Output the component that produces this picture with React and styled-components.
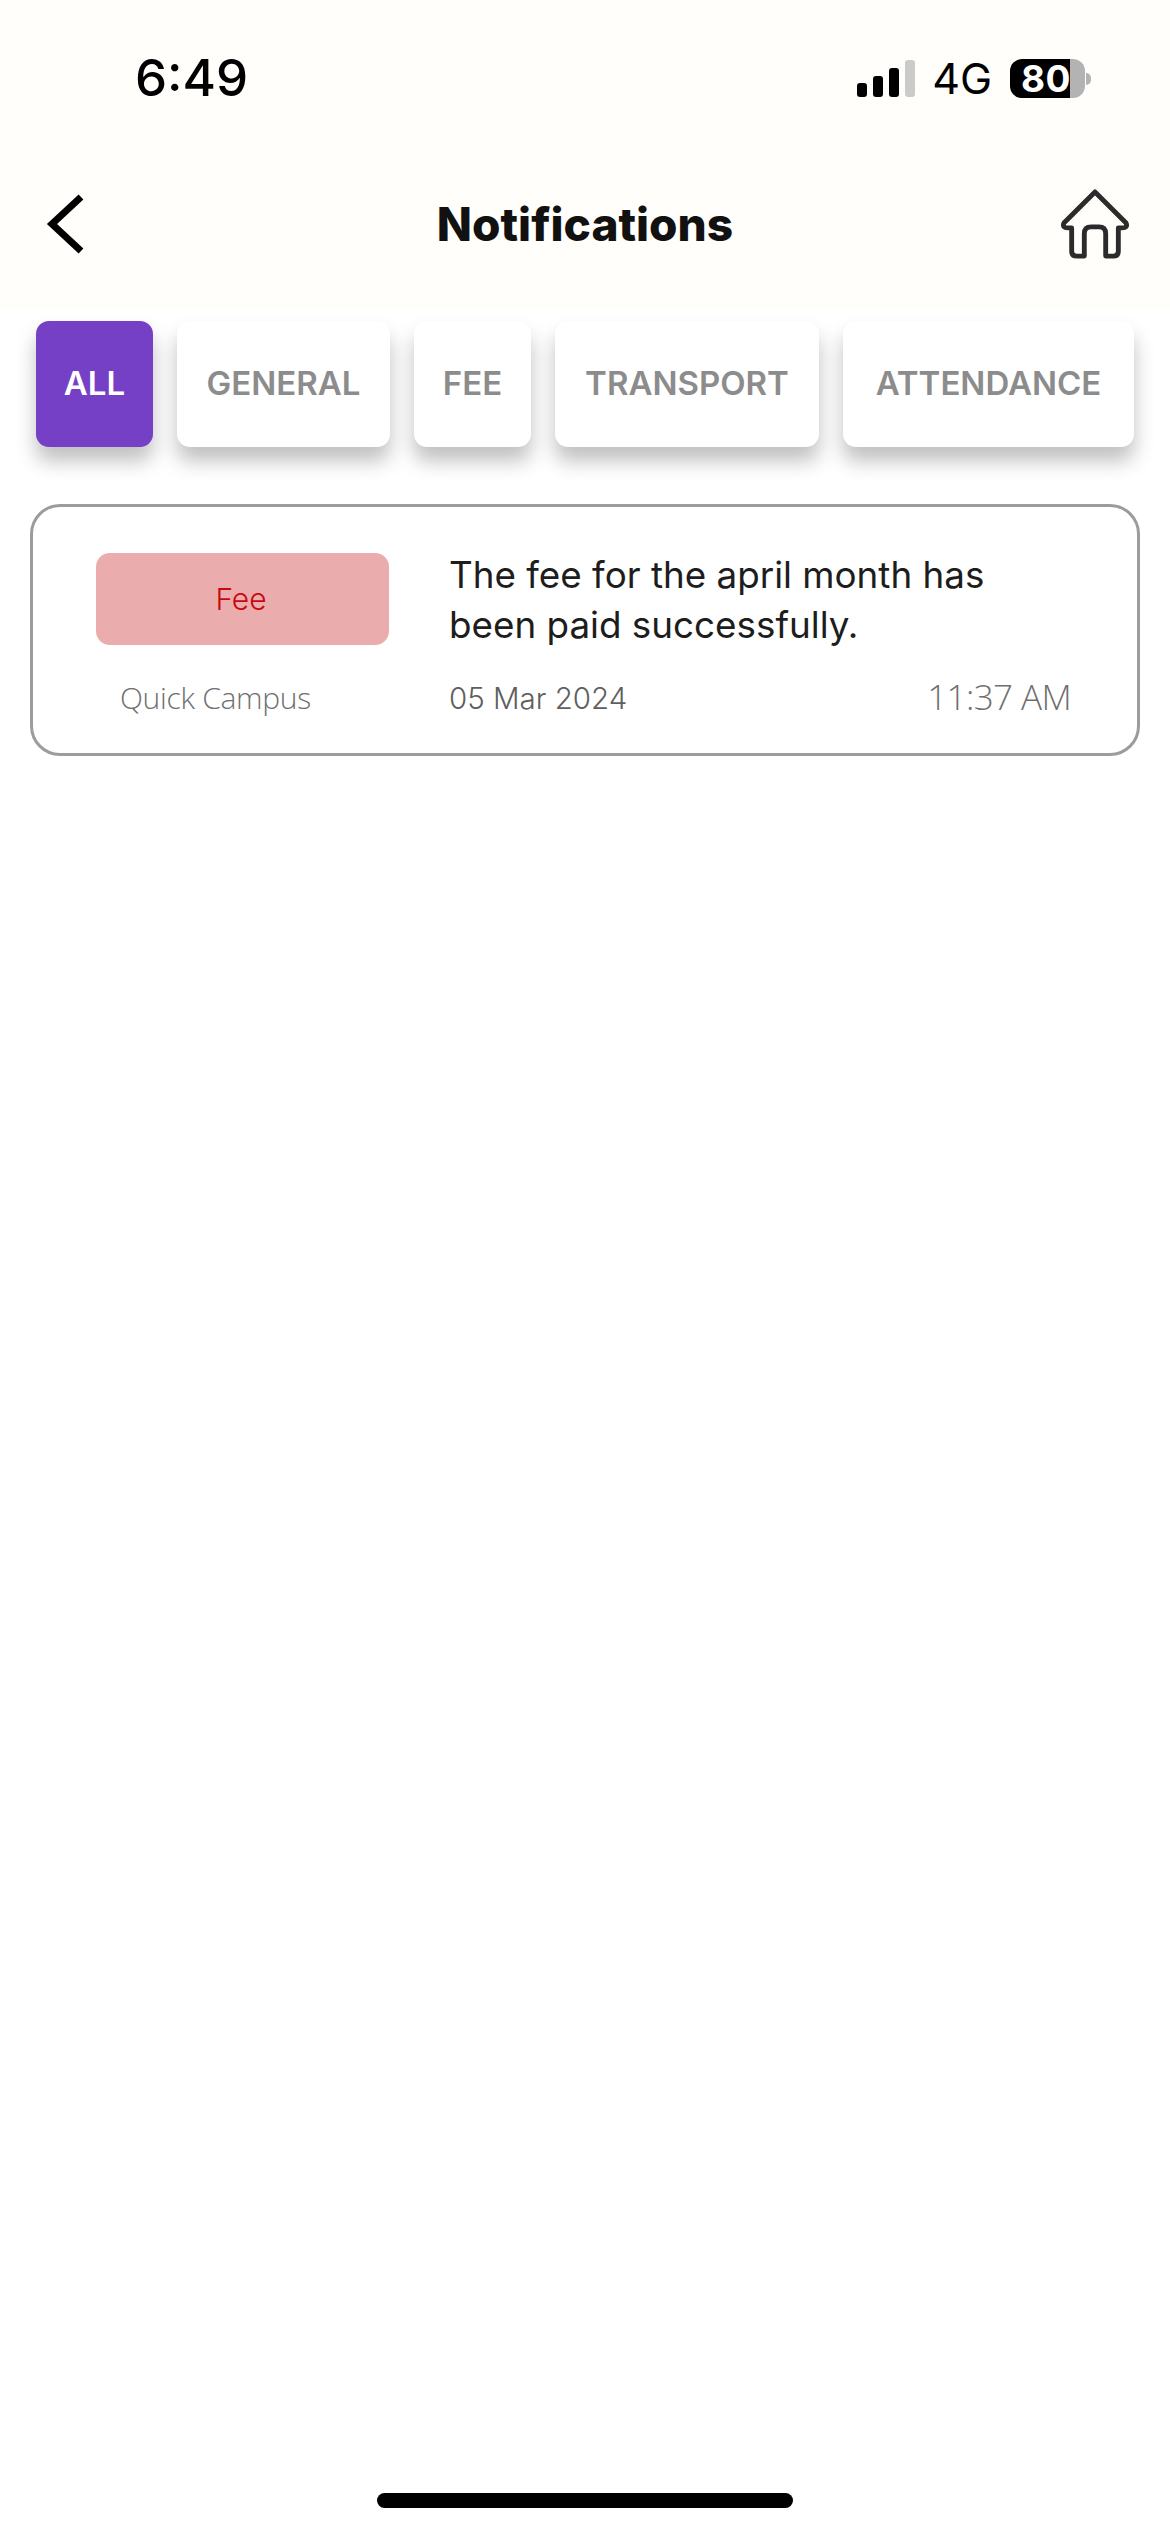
import React from 'react';
import styled, { createGlobalStyle } from 'styled-components';

const GlobalStyle = createGlobalStyle`
  * { box-sizing: border-box; }
  html, body { margin: 0; padding: 0; background: #fff; }
  body { font-family: Inter, 'Liberation Sans', sans-serif; }
`;

const Page = styled.div`
  width: 1170px;
  height: 2532px;
  display: flex;
  flex-direction: column;
  background: #fff;
  overflow: hidden;
`;

const Top = styled.div`
  height: 309px;
  background: #fffefb;
`;

const StatusBar = styled.div`
  height: 150px;
  padding: 50px 85px 0 135px;
  display: flex;
  justify-content: space-between;
  align-items: flex-start;
`;

const Clock = styled.div`
  font-size: 51px;
  line-height: 56px;
  font-weight: 500;
  color: #000;
`;

const StatusRight = styled.div`
  display: flex;
  align-items: center;
  height: 40px;
  margin-top: 8px;
`;

const Signal = styled.div`
  display: flex;
  align-items: flex-end;
  gap: 6px;
  height: 37px;
  margin-right: 17px;
`;

const Bar = styled.span`
  width: 10px;
  height: ${({ h }) => h}px;
  border-radius: 3px;
  background: ${({ off }) => (off ? '#cbcbcb' : '#000')};
`;

const Network = styled.div`
  font-size: 43px;
  line-height: 40px;
  font-weight: 400;
  color: #000;
  margin-right: 18px;
`;

const Battery = styled.div`
  position: relative;
  width: 75px;
  height: 39px;
  border-radius: 12px;
  background: linear-gradient(90deg, #000 80%, #b3b3b3 80%);
  color: #fff;
  font-size: 37px;
  line-height: 39px;
  font-weight: 700;
  padding-left: 11px;
  letter-spacing: 0.5px;

  &::after {
    content: '';
    position: absolute;
    left: 76px;
    top: 14px;
    width: 5px;
    height: 12px;
    border-radius: 0 6px 6px 0;
    background: #b3b3b3;
  }
`;

const Header = styled.div`
  height: 159px;
  padding: 0 40px 12px 46px;
  display: flex;
  align-items: center;
  justify-content: space-between;
  position: relative;
`;

const Title = styled.h1`
  position: absolute;
  left: 0;
  right: 0;
  margin: 0;
  text-align: center;
  font-size: 46px;
  line-height: 56px;
  font-weight: 800;
  color: #111;
`;

const Tabs = styled.div`
  margin-top: 12px;
  padding: 0 36px;
  display: flex;
  gap: 24px;
`;

const Tab = styled.div`
  width: ${({ w }) => w}px;
  height: 126px;
  padding-bottom: 3px;
  border-radius: 13px;
  display: flex;
  align-items: center;
  justify-content: center;
  font-size: 33px;
  font-weight: 600;
  white-space: nowrap;
  background: ${({ active }) => (active ? '#7540c5' : '#fff')};
  color: ${({ active }) => (active ? '#fff' : '#8c8c8c')};
  box-shadow: 0 14px 20px rgba(0, 0, 0, 0.25);
`;

const Card = styled.div`
  margin: 57px 30px 0;
  height: 252px;
  padding: 46px 66px 0 63px;
  border: 3px solid #9c9c9c;
  border-radius: 30px;
  display: grid;
  grid-template-columns: 293px 1fr;
  grid-template-rows: 92px 1fr;
  column-gap: 60px;
`;

const Badge = styled.div`
  border-radius: 14px;
  background: #ebacad;
  color: #c9080e;
  font-size: 30px;
  font-weight: 300;
  padding-right: 3px;
  display: flex;
  align-items: center;
  justify-content: center;
`;

const Message = styled.div`
  font-size: 36.8px;
  line-height: 50px;
  font-weight: 400;
  color: #1d1d1d;
  margin-top: -3px;
  white-space: nowrap;
`;

const Source = styled.div`
  font-family: 'Open Sans', sans-serif;
  font-size: 30px;
  line-height: 40px;
  font-weight: 300;
  color: #6f6f6f;
  margin: 33px 0 0 24px;
  letter-spacing: -0.3px;
`;

const Meta = styled.div`
  display: flex;
  justify-content: space-between;
  align-items: center;
  margin-top: 33px;
  height: 40px;
`;

const DateText = styled.span`
  font-size: 29.5px;
  font-weight: 350;
  color: #5f5f5f;
`;

const TimeText = styled.span`
  font-family: 'Open Sans', sans-serif;
  font-size: 35px;
  font-weight: 300;
  color: #6f6f6f;
  letter-spacing: -0.6px;
  margin-top: -4px;
`;

const HomeBar = styled.div`
  margin: auto auto 24px;
  width: 416px;
  height: 15px;
  border-radius: 8px;
  background: #000;
`;

const tabs = [
  { name: 'ALL', w: 117, active: true },
  { name: 'GENERAL', w: 213 },
  { name: 'FEE', w: 117 },
  { name: 'TRANSPORT', w: 264 },
  { name: 'ATTENDANCE', w: 291 }
];

const BackIcon = () => (
  <svg width="40" height="60" viewBox="0 0 40 60" fill="none">
    <path d="M35 3 L6 30 L35 57" stroke="#000" strokeWidth="7" />
  </svg>
);

const HomeIcon = () => (
  <svg width="70" height="70" viewBox="0 0 72 72" fill="none">
    <path
      d="M36 3 L68 35 Q70 40 64 40 H60 V64 Q60 69 55 69 H47 V46 Q47 39 40 39 H32 Q25 39 25 46 V69 H17 Q12 69 12 64 V40 H8 Q2 40 4 35 Z"
      stroke="#2b2b2b"
      strokeWidth="5"
      strokeLinejoin="round"
    />
  </svg>
);

const App = () => (
  <Page>
    <GlobalStyle />
    <Top>
      <StatusBar>
        <Clock>6:49</Clock>
        <StatusRight>
          <Signal>
            <Bar h={14} />
            <Bar h={21} />
            <Bar h={29} />
            <Bar h={37} off />
          </Signal>
          <Network>4G</Network>
          <Battery>80</Battery>
        </StatusRight>
      </StatusBar>
      <Header>
        <BackIcon />
        <Title>Notifications</Title>
        <HomeIcon />
      </Header>
    </Top>
    <Tabs>
      {tabs.map(tab => (
        <Tab key={tab.name} w={tab.w} active={tab.active}>
          {tab.name}
        </Tab>
      ))}
    </Tabs>
    <Card>
      <Badge>Fee</Badge>
      <Message>
        The fee for the april month has
        <br />
        been paid successfully.
      </Message>
      <Source>Quick Campus</Source>
      <Meta>
        <DateText>05 Mar 2024</DateText>
        <TimeText>11:37 AM</TimeText>
      </Meta>
    </Card>
    <HomeBar />
  </Page>
);

export default App;
